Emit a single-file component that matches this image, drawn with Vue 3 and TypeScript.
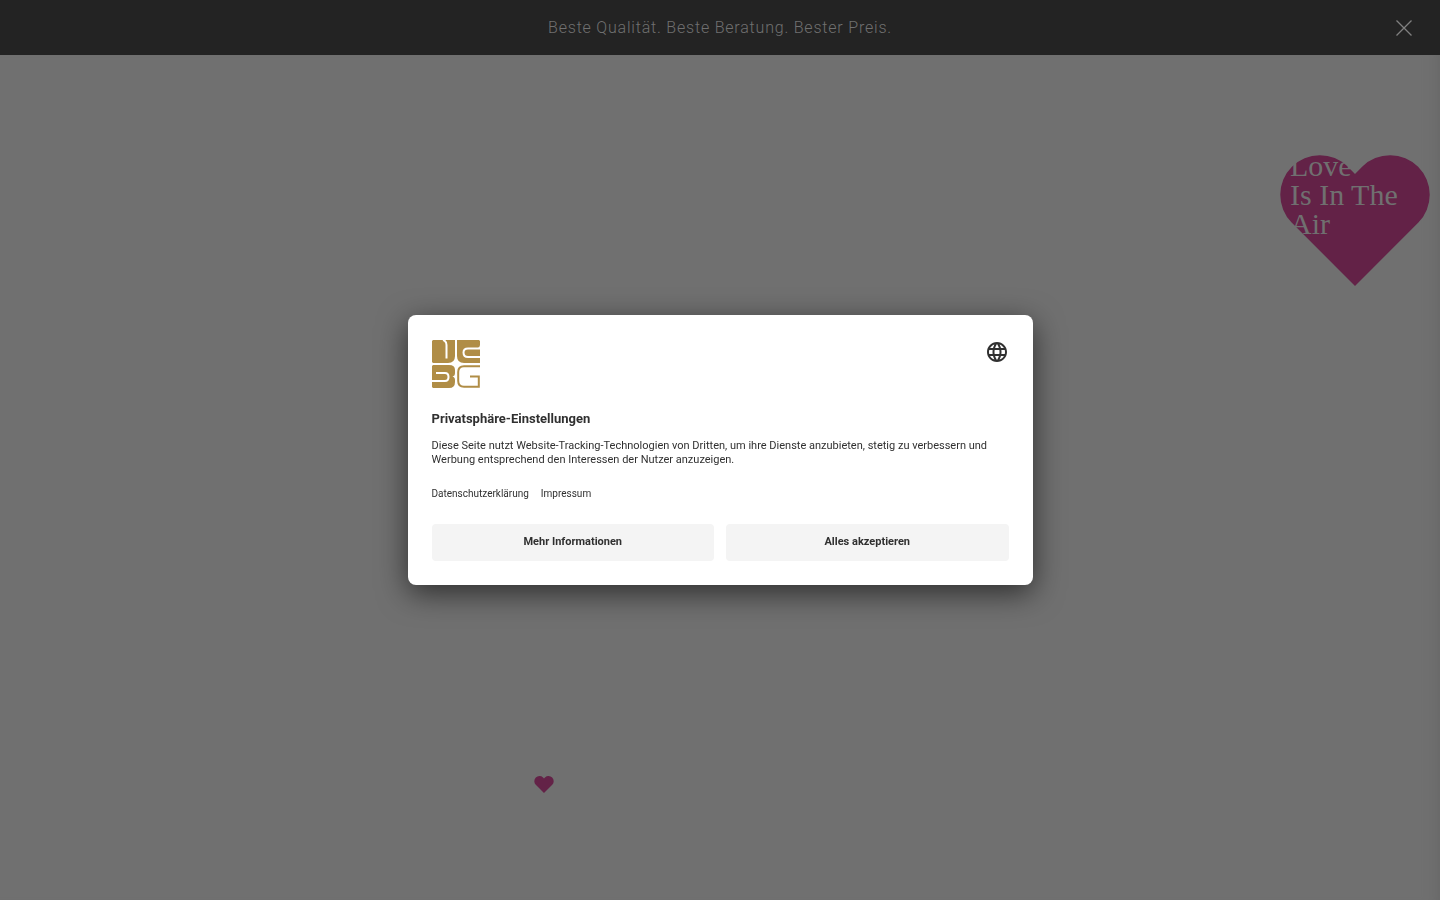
<script setup lang="ts">
import { ref } from 'vue'

const bannerOpen = ref(true)
const consentOpen = ref(true)
const loveLines: string[] = ['Love', 'Is In The', 'Air']
const legalLinks: { label: string; href: string }[] = [
  { label: 'Datenschutzerklärung', href: '#datenschutz' },
  { label: 'Impressum', href: '#impressum' },
]
</script>

<template>
  <div class="page">
    <header v-if="bannerOpen" class="banner">
      <p class="slogan">Beste Qualität. Beste Beratung. Bester Preis.</p>
      <button class="close" type="button" aria-label="Schließen" @click="bannerOpen = false">
        <svg width="16" height="16" viewBox="0 0 16 16" aria-hidden="true">
          <path d="M.5 .5 15.5 15.5M15.5 .5 .5 15.5" fill="none" stroke="currentColor" stroke-width="1.3" />
        </svg>
      </button>
    </header>

    <main class="content">
      <a class="love" href="#love">
        <svg class="love-shape" viewBox="0 0 150 131" aria-hidden="true">
          <path d="M75 131 11.6 67.5A39.6 39.6 0 0 1 67.6 11.5L75 19 82.4 11.5A39.6 39.6 0 0 1 138.4 67.5Z" />
        </svg>
        <span class="love-text">
          <span v-for="line in loveLines" :key="line" class="love-line">{{ line }}</span>
        </span>
      </a>
      <svg class="small-heart" width="20" height="17" viewBox="0 0 150 131" aria-hidden="true">
        <path d="M75 131 11.6 67.5A39.6 39.6 0 0 1 67.6 11.5L75 19 82.4 11.5A39.6 39.6 0 0 1 138.4 67.5Z" />
      </svg>
    </main>

    <div v-if="consentOpen" class="overlay">
      <section class="dialog" role="dialog" aria-modal="true" aria-labelledby="consent-title">
        <div class="dialog-head">
          <svg class="logo" width="48" height="48" viewBox="0 0 48 48" role="img" aria-label="Logo">
            <path d="M1 0H23V16Q23 23 16 23H1L0 22V1Z" />
            <path d="M25 0H47L48 1V5Q48 7 46 7.500L48 8V23H32Q25 23 25 16Z" />
            <path d="M1 25H17Q23 25 23 30V33Q23 36 20.500 36.500Q23 37 23 40V42Q23 48 17 48H1L0 47V26Z" />
            <path class="logo-cut" d="M11 0Q14.500 1 14.500 5V18.500" />
            <path class="logo-cut" d="M48 8.500H36Q31.500 8.500 31.500 12.500Q31.500 17 36 17H48" />
            <path class="logo-cut" d="M4 33H13Q16.500 33 16.500 37Q16.500 41 13 41H0" />
            <path class="logo-line" d="M48 26.200H32Q26.200 26.200 26.200 32V41Q26.200 46.800 32 46.800H46.800V36.500H38" />
          </svg>
          <button class="language" type="button" aria-label="Sprache wählen">
            <svg width="24" height="24" viewBox="0 0 24 24" aria-hidden="true">
              <path d="M11.990 2C6.470 2 2 6.480 2 12s4.470 10 9.990 10C17.520 22 22 17.520 22 12S17.520 2 11.990 2zm6.930 6h-2.950c-.32-1.250-.78-2.450-1.380-3.560 1.840.63 3.370 1.910 4.330 3.560zM12 4.040c.83 1.200 1.480 2.530 1.910 3.960h-3.820c.43-1.430 1.080-2.760 1.910-3.960zM4.260 14C4.100 13.360 4 12.690 4 12s.1-1.360.26-2h3.380c-.08.66-.14 1.320-.14 2s.06 1.340.14 2H4.260zm.82 2h2.950c.32 1.250.78 2.450 1.380 3.560-1.840-.63-3.370-1.900-4.330-3.560zm2.950-8H5.080c.96-1.660 2.490-2.930 4.330-3.560C8.810 5.550 8.350 6.750 8.030 8zM12 19.960c-.83-1.200-1.480-2.530-1.910-3.960h3.820c-.43 1.430-1.080 2.760-1.910 3.960zM14.340 14H9.660c-.09-.66-.16-1.320-.16-2s.07-1.350.16-2h4.680c.09.65.16 1.320.16 2s-.07 1.340-.16 2zm.25 5.560c.6-1.110 1.060-2.310 1.380-3.560h2.950c-.96 1.650-2.490 2.930-4.330 3.560zM16.360 14c.08-.66.14-1.320.14-2s-.06-1.340-.14-2h3.380c.16.64.26 1.310.26 2s-.1 1.360-.26 2h-3.380z" />
            </svg>
          </button>
        </div>
        <h1 id="consent-title" class="title">Privatsphäre-Einstellungen</h1>
        <p class="text">
          Diese Seite nutzt Website-Tracking-Technologien von Dritten, um ihre Dienste anzubieten, stetig zu verbessern und
          Werbung entsprechend den Interessen der Nutzer anzuzeigen.
        </p>
        <nav class="links">
          <a v-for="link in legalLinks" :key="link.href" :href="link.href">{{ link.label }}</a>
        </nav>
        <div class="actions">
          <button type="button">Mehr Informationen</button>
          <button type="button" @click="consentOpen = false">Alles akzeptieren</button>
        </div>
      </section>
    </div>
  </div>
</template>

<style>
body {
  margin: 0;
  background: #707070;
}
</style>

<style scoped>
.page {
  min-height: 100vh;
  display: flex;
  flex-direction: column;
  font-family: Roboto, "Liberation Sans", sans-serif;
  background: #707070;
}
.banner {
  display: grid;
  grid-template-columns: 1fr auto 1fr;
  align-items: center;
  padding: 0 24px;
  min-height: 55px;
  box-sizing: border-box;
  background: #232323;
  color: #707070;
}
.slogan {
  grid-column: 2;
  margin: 0;
  font-size: 16px;
  line-height: 24px;
  font-weight: 300;
  letter-spacing: 0.05em;
}
.close {
  justify-self: end;
  display: flex;
  padding: 4px;
  border: 0;
  background: none;
  color: #808080;
  cursor: pointer;
}
.content {
  flex: 1;
  position: relative;
  box-shadow: inset -16px 0 16px -16px #646464;
}
.love {
  position: absolute;
  top: 100px;
  right: 10px;
  width: 150px;
  height: 131px;
  color: #707070;
  text-decoration: none;
}
.love-shape {
  display: block;
  width: 100%;
  fill: #632247;
}
.love-text {
  position: absolute;
  top: -4px;
  left: 10px;
  font-family: "Liberation Serif", serif;
  font-size: 30px;
  line-height: 29px;
  white-space: nowrap;
}
.love-line {
  display: block;
}
.small-heart {
  position: absolute;
  left: 534px;
  bottom: 107px;
  fill: #632247;
}
.overlay {
  position: fixed;
  inset: 0;
  display: flex;
  align-items: center;
  justify-content: center;
}
.dialog {
  box-sizing: border-box;
  width: 625px;
  max-width: calc(100% - 32px);
  padding: 24px;
  border-radius: 8px;
  background: #fff;
  color: #303030;
  box-shadow: 0 8px 30px rgba(0, 0, 0, 0.6);
}
.dialog-head {
  display: flex;
  justify-content: space-between;
  align-items: flex-start;
}
.logo {
  margin-top: 1px;
  fill: #b08d46;
}
.logo-cut {
  fill: none;
  stroke: #fff;
  stroke-width: 2;
}
.logo-line {
  fill: none;
  stroke: #b08d46;
  stroke-width: 2;
}
.language {
  display: flex;
  padding: 0;
  margin: 1px 0 0;
  border: 0;
  background: none;
  fill: #303030;
  cursor: pointer;
}
.title {
  margin: 22px 0 0;
  font-size: 13px;
  line-height: 18px;
  font-weight: 700;
}
.text {
  margin: 11px 0 0;
  font-size: 11px;
  line-height: 14px;
}
.links {
  display: flex;
  gap: 12px;
  margin-top: 19px;
  font-size: 10px;
  line-height: 16px;
}
.links a {
  color: inherit;
  text-decoration: none;
}
.actions {
  display: grid;
  grid-template-columns: 1fr 1fr;
  gap: 12px;
  margin-top: 22px;
}
.actions button {
  min-height: 37px;
  padding: 0 12px 2px;
  border: 0;
  border-radius: 4px;
  background: #f4f4f4;
  color: inherit;
  font-family: inherit;
  font-size: 11px;
  font-weight: 700;
  cursor: pointer;
}
</style>
